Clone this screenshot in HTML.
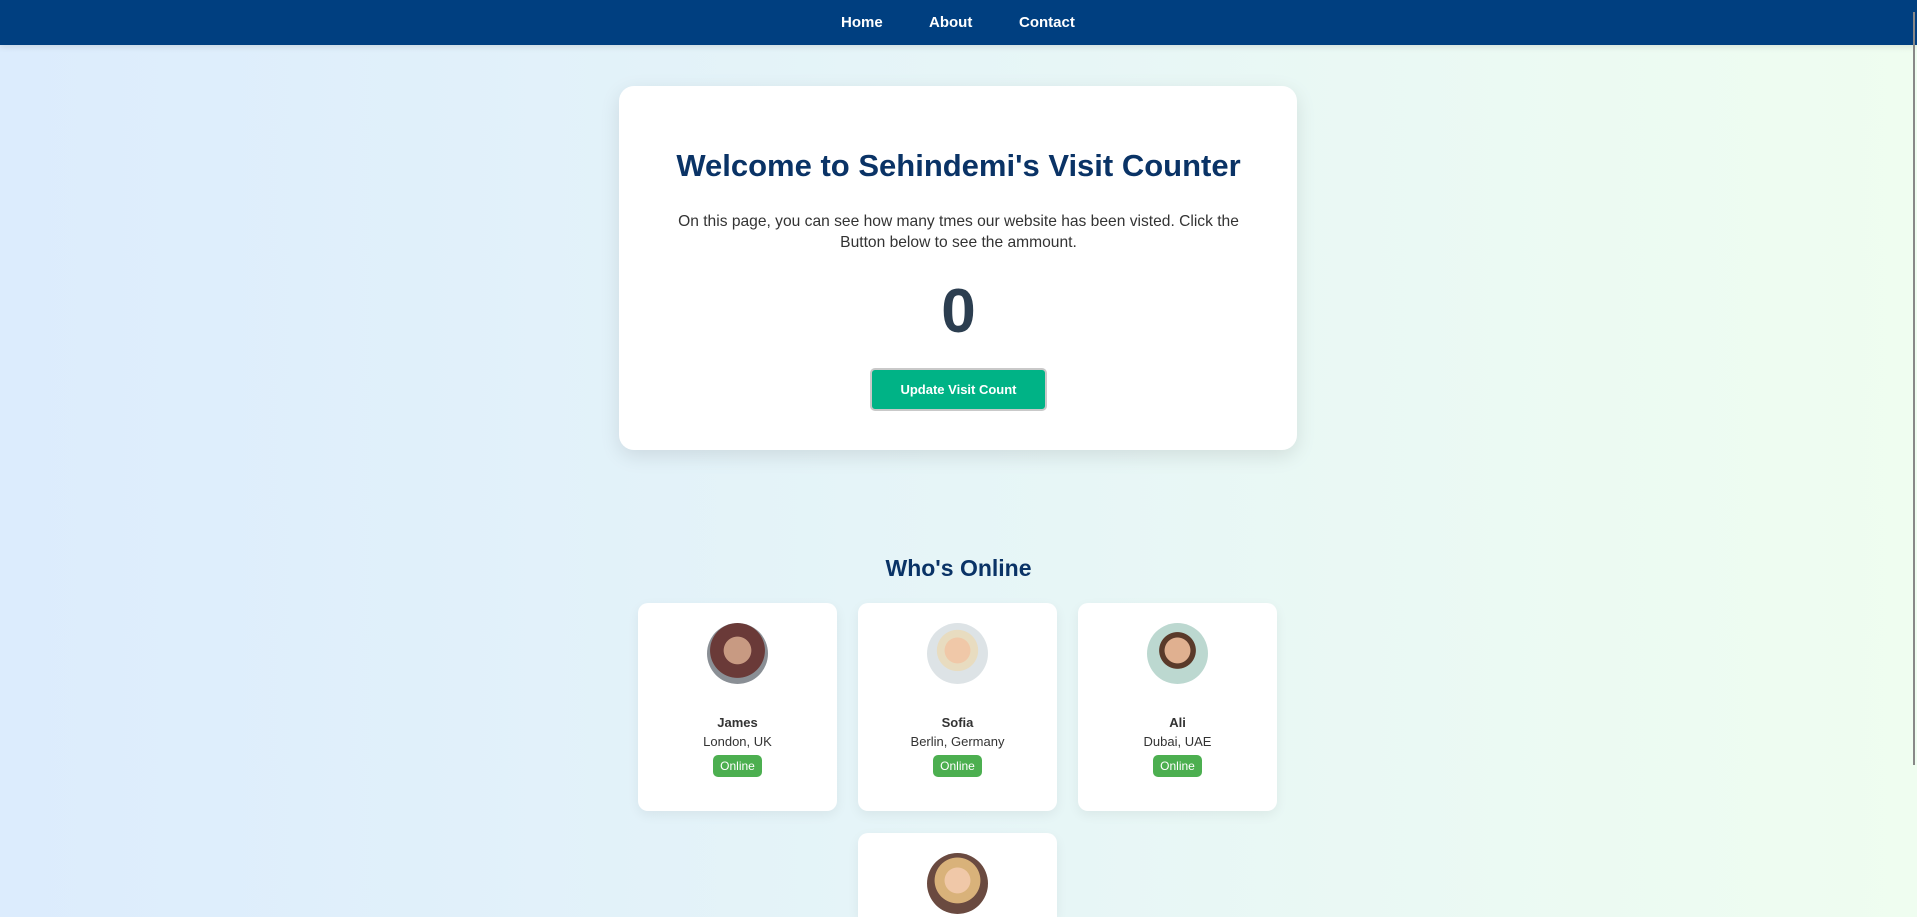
<!DOCTYPE html>
<html><head><style>
*{box-sizing:border-box;margin:0;padding:0}
html,body{width:1917px;height:917px;overflow:hidden}
body{font-family:"Liberation Sans",sans-serif;background:linear-gradient(90deg,#dcecfd 0%,#e6f5f7 50%,#effdf0 100%);position:relative}
nav{height:45px;background:#003f80;box-shadow:0 2px 6px rgba(0,0,0,.1);position:relative}
nav a{color:#fff;font-weight:bold;font-size:15px;text-decoration:none;position:absolute;top:14px}
.card{position:absolute;left:619px;top:86px;width:678px;height:364px;background:#fff;border-radius:15px;box-shadow:0 6px 20px rgba(0,0,0,.1);text-align:center}
h1{position:absolute;top:148px;left:0;width:1917px;text-align:center;font-size:31px;color:#0a3366;font-weight:bold}
.p{position:absolute;top:211px;left:0;width:1917px;text-align:center;font-size:15.6px;line-height:21px;color:#333}
.zero{position:absolute;top:276px;width:1917px;text-align:center;font-size:62px;font-weight:bold;color:#2c3e50}
.btn{position:absolute;left:870px;top:368px;width:177px;height:43px;background:#00b386;border:2px solid #c9c9c9;border-radius:5px;color:#fff;font-weight:bold;font-size:13px;line-height:39px;text-align:center}
h2{position:absolute;top:555px;width:1917px;text-align:center;font-size:23px;color:#0a3366}
.u{position:absolute;width:199px;height:208px;background:#fff;border-radius:10px;box-shadow:0 4px 12px rgba(0,0,0,.06);text-align:center}
.av{width:61px;height:61px;border-radius:50%;margin:20px auto 0}
.n{margin-top:31px;font-weight:bold;font-size:13px;color:#333}
.l{font-size:13px;color:#333;margin-top:4px}
.b{display:inline-block;margin-top:6px;background:#4caf50;color:#fff;font-size:12px;padding:4px 7px;border-radius:5px}
.sb{position:absolute;right:2px;top:12px;width:2px;height:753px;background:#888}
</style></head><body>
<nav><a style="left:841px">Home</a><a style="left:929px">About</a><a style="left:1019px">Contact</a></nav>
<div class="card"></div>
<h1>Welcome to Sehindemi's Visit Counter</h1>
<div class="p">On this page, you can see how many tmes our website has been visted. Click the<br>Button below to see the ammount.</div>
<div class="zero">0</div>
<div class="btn">Update Visit Count</div>
<h2>Who's Online</h2>
<div class="u" style="left:638px;top:603px"><div class="av" style="background:radial-gradient(circle at 50% 45%,#c89a82 0 30%,#6a3a38 31% 60%,#8a8f95 61%)"></div><div class="n">James</div><div class="l">London, UK</div><div class="b">Online</div></div>
<div class="u" style="left:858px;top:603px"><div class="av" style="background:radial-gradient(circle at 50% 45%,#f0c8a8 0 28%,#e8dcc0 29% 45%,#dde3e6 46%)"></div><div class="n">Sofia</div><div class="l">Berlin, Germany</div><div class="b">Online</div></div>
<div class="u" style="left:1078px;top:603px"><div class="av" style="background:radial-gradient(circle at 50% 45%,#e0b090 0 28%,#5a3a2a 29% 40%,#bcd8d0 41%)"></div><div class="n">Ali</div><div class="l">Dubai, UAE</div><div class="b">Online</div></div>
<div class="u" style="left:858px;top:833px;height:84px;border-radius:10px 10px 0 0"><div class="av" style="background:radial-gradient(circle at 50% 45%,#f0c8a8 0 28%,#d9b27a 29% 50%,#6a4a40 51%)"></div></div>
<div class="sb"></div>
</body></html>
